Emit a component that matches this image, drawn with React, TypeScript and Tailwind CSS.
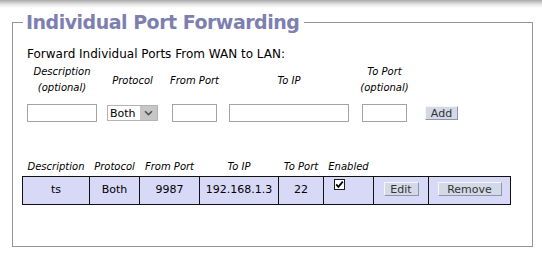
const headCols = [
  { label: "Description", w: "w-[67px]" },
  { label: "Protocol", w: "w-[50px]" },
  { label: "From Port", w: "w-[60px]" },
  { label: "To IP", w: "w-[79px]" },
  { label: "To Port", w: "w-[45px]" },
  { label: "Enabled", w: "w-[50px]" },
  { label: "", w: "w-[55px]" },
  { label: "", w: "w-[82px]" },
];

const rows = [{ desc: "ts", proto: "Both", from: "9987", ip: "192.168.1.3", to: "22", enabled: true }];

function Btn({ label, className }: { label: string; className: string }) {
  return (
    <button
      className={`inline-flex h-[14px] items-center justify-center border border-t-[#f4f6fa] border-l-[#f4f6fa] border-r-[#8e96a8] border-b-[#8e96a8] bg-[#d3d9e6] text-[11px] leading-none text-[#333] ${className}`}
    >
      {label}
    </button>
  );
}

function Check() {
  return (
    <span className="inline-flex h-[11px] w-[11px] items-center justify-center border border-[#1c1c1c] bg-white">
      <svg width="9" height="9" viewBox="0 0 9 9">
        <path d="M1.2 4.4 L3.4 6.8 L7.8 1.6" fill="none" stroke="#000" strokeWidth="1.8" />
      </svg>
    </span>
  );
}

export default function App() {
  return (
    <div className="relative h-[256px] w-[542px] overflow-hidden bg-white pt-[10px] text-[11px] text-black [font-family:'DejaVu_Sans',Verdana,sans-serif]">
      {/* top shadow strip */}
      <div className="pointer-events-none absolute inset-x-0 top-0 h-[8px] bg-gradient-to-b from-[#a8a8a8] via-[#e2e2e2] to-white" />

      <fieldset className="ml-[12px] h-[237px] w-[521px] border border-[#959595] pl-[10px]">
        <legend className="px-[3px] pr-[5px] text-[19px] font-bold leading-[24px] tracking-[-0.5px] text-[#7e7fb1]">
          Individual Port Forwarding
        </legend>

        <div className="pl-[4px] pt-[13px]">
          <p className="text-[12px] leading-[14px]">Forward Individual Ports From WAN to LAN:</p>

          {/* add form */}
          <div className="mt-[3px] flex items-start">
            <div className="flex w-[70px] flex-col items-center">
              <div className="flex h-[32px] flex-col items-center justify-center whitespace-nowrap text-[10px] italic leading-[16px]">
                <span>Description</span>
                <span>(optional)</span>
              </div>
              <input className="mt-[8px] h-[18px] w-[70px] border border-[#a3a3a3] bg-white" />
            </div>

            <div className="ml-[10px] flex w-[51px] flex-col items-center">
              <div className="flex h-[32px] items-center whitespace-nowrap text-[10px] italic">Protocol</div>
              <div className="mt-[9px] flex h-[16px] w-[51px] items-stretch border border-[#b4b4b4] bg-white">
                <span className="flex flex-1 items-center pl-[2px] leading-none">Both</span>
                <span className="flex w-[17px] items-center justify-center bg-[#c6c6c6]">
                  <svg width="9" height="6" viewBox="0 0 9 6">
                    <path d="M1 1.2 L4.5 4.6 L8 1.2" fill="none" stroke="#505050" strokeWidth="1.5" />
                  </svg>
                </span>
              </div>
            </div>

            <div className="ml-[14px] flex w-[45px] flex-col items-center">
              <div className="flex h-[32px] items-center whitespace-nowrap text-[10px] italic">From Port</div>
              <input className="mt-[8px] h-[18px] w-[45px] border border-[#a3a3a3] bg-white" />
            </div>

            <div className="ml-[12px] flex w-[120px] flex-col items-center">
              <div className="flex h-[32px] items-center whitespace-nowrap text-[10px] italic">To IP</div>
              <input className="mt-[8px] h-[18px] w-[120px] border border-[#a3a3a3] bg-white" />
            </div>

            <div className="ml-[13px] flex w-[45px] flex-col items-center">
              <div className="flex h-[32px] flex-col items-center justify-center whitespace-nowrap text-[10px] italic leading-[16px]">
                <span>To Port</span>
                <span>(optional)</span>
              </div>
              <input className="mt-[8px] h-[18px] w-[45px] border border-[#a3a3a3] bg-white" />
            </div>

            <div className="ml-[18px] mt-[42px] flex w-[33px]">
              <Btn label="Add" className="w-[33px]" />
            </div>
          </div>

          {/* list of rules */}
          <table className="-ml-[5px] mt-[36px] border-collapse">
            <thead>
              <tr className="h-[18px]">
                {headCols.map((c, i) => (
                  <th key={i} className={`${c.w} whitespace-nowrap p-0 text-center text-[10px] font-normal italic leading-none`}>
                    {c.label}
                  </th>
                ))}
              </tr>
            </thead>
            <tbody>
              {rows.map((r) => (
                <tr key={r.desc} className="h-[28px] bg-[#d8d8f7] text-center">
                  <td className="border border-[#111] p-0">{r.desc}</td>
                  <td className="border border-[#111] p-0">{r.proto}</td>
                  <td className="border border-[#111] p-0">{r.from}</td>
                  <td className="border border-[#111] p-0">{r.ip}</td>
                  <td className="border border-[#111] p-0">{r.to}</td>
                  <td className="border border-[#111] p-0 pl-[10px] pt-[1px] text-left align-top">
                    {r.enabled && <Check />}
                  </td>
                  <td className="border border-[#111] p-0">
                    <Btn label="Edit" className="w-[35px]" />
                  </td>
                  <td className="border border-[#111] p-0">
                    <Btn label="Remove" className="w-[64px]" />
                  </td>
                </tr>
              ))}
            </tbody>
          </table>
        </div>
      </fieldset>
    </div>
  );
}
